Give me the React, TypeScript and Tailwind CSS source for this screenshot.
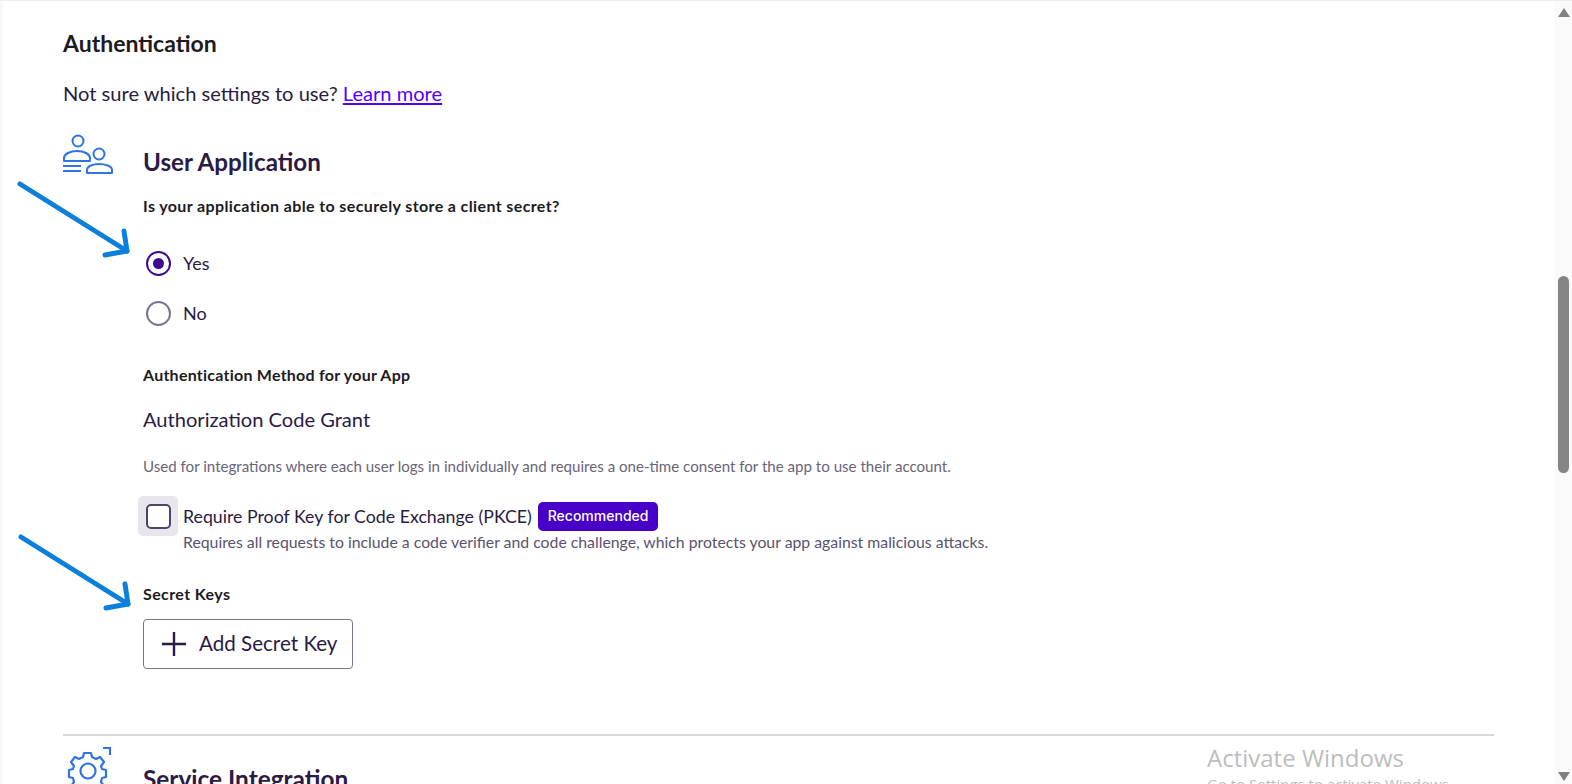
function UsersIcon() {
  return (
    <svg width="52" height="44" viewBox="0 0 52 44" fill="none" stroke="#2f74e0" strokeWidth="2">
      <circle cx="15" cy="7" r="5.5" />
      <path d="M1 27v-3c0-4 6-7 13-7s13 3 13 7v3z" strokeLinejoin="round" />
      <circle cx="36" cy="20" r="5.5" />
      <path d="M24 39v-3c0-4 6-6 12-6s13 2 13 6v3z" strokeLinejoin="round" />
      <path d="M0 32h18M0 37h18" />
    </svg>
  );
}

function GearIcon() {
  return (
    <svg width="46" height="46" viewBox="0 0 46 46" fill="none" stroke="#2f74e0" strokeWidth="2.2">
      <path d="M36 1h7v7" />
      <circle cx="21" cy="24" r="7.5" />
      <path
        d="M17 6h7l1 4 4 2 4-2 4 5-3 4 1 3 4 1v7l-4 1-1 4 3 4-4 5-4-2-4 2-1 4h-7l-1-4-4-2-4 2-4-5 3-4-1-4-4-1v-7l4-1 1-3-3-4 4-5 4 2 4-2z"
        strokeLinejoin="round"
      />
    </svg>
  );
}

function PlusIcon() {
  return (
    <svg width="24" height="24" viewBox="0 0 24 24" fill="none" stroke="#2a1a45" strokeWidth="2.4">
      <path d="M12 0v24M0 12h24" />
    </svg>
  );
}

function Arrow({ className }: { className: string }) {
  return (
    <svg className={className} width="120" height="84" viewBox="0 0 120 84" fill="none" stroke="#0a7fdc" strokeWidth="5" strokeLinecap="round" strokeLinejoin="round">
      <path d="M3 3 L110 70" />
      <path d="M107 50 L110 70 L88 74" />
    </svg>
  );
}

export default function App() {
  return (
    <div className="relative flex h-[784px] overflow-hidden border-t border-[#ececec] bg-white font-['Lato',sans-serif] text-[#2a1a45]">
      <div className="w-[3px] shrink-0 bg-[#f8f8f8]" />

      <main className="min-w-0 flex-1 pl-[60px] pr-[61px]">
        <h2 className="mt-[28px] text-[23px] leading-[28px] font-bold text-[#1d1a22]">Authentication</h2>
        <p className="mt-[22px] text-[20.1px] leading-[28px]">
          Not sure which settings to use?{" "}
          <a href="#" className="text-[#5500ff] underline">Learn more</a>
        </p>

        <section className="mt-[27px] flex">
          <div className="w-[80px] shrink-0">
            <UsersIcon />
          </div>
          <div className="flex-1">
            <h3 className="mt-[13px] text-[24.2px] leading-[30px] font-bold">User Application</h3>
            <p className="mt-[19px] text-[16px] leading-[20px] font-bold tracking-[0.38px] text-[#1d1a22]">
              Is your application able to securely store a client secret?
            </p>

            <div className="mt-[35px] flex flex-col gap-[25px] pl-[3px]">
              <label className="flex h-[25px] items-center gap-[12px] text-[18px]">
                <span className="flex h-[25px] w-[25px] items-center justify-center rounded-full border-2 border-[#3d0a91]">
                  <span className="h-[11px] w-[11px] rounded-full bg-[#3d0a91]" />
                </span>
                Yes
              </label>
              <label className="flex h-[25px] items-center gap-[12px] text-[18px]">
                <span className="h-[25px] w-[25px] rounded-full border-2 border-[#7b7290]" />
                No
              </label>
            </div>

            <p className="mt-[39px] text-[16px] leading-[20px] font-bold tracking-[0.24px] text-[#1d1a22]">
              Authentication Method for your App
            </p>
            <p className="mt-[20px] text-[20.1px] leading-[28px]">Authorization Code Grant</p>
            <p className="mt-[23px] text-[15.1px] leading-[20px] text-[#6a6478]">
              Used for integrations where each user logs in individually and requires a one-time consent for the app to use their account.
            </p>

            <div className="mt-[20px] -ml-[5px] flex">
              <div className="flex h-[40px] w-[40px] shrink-0 items-center justify-center rounded-[5px] bg-[#e8e6ec]">
                <span className="h-[25px] w-[25px] rounded-[5px] border-2 border-[#4f4468] bg-white" />
              </div>
              <div className="ml-[5px]">
                <div className="mt-[5px] flex items-center gap-[6px] text-[17.75px] leading-[30px]">
                  Require Proof Key for Code Exchange (PKCE)
                  <span className="flex h-[29px] items-center rounded-[5px] bg-[#4800c8] px-[10px] font-['Inter',sans-serif] text-[14px] font-medium text-white">
                    Recommended
                  </span>
                </div>
                <p className="mt-[1px] text-[15.8px] leading-[20px] text-[#5a5270]">
                  Requires all requests to include a code verifier and code challenge, which protects your app against malicious attacks.
                </p>
              </div>
            </div>

            <p className="mt-[32px] text-[16px] leading-[20px] font-bold tracking-[0.4px] text-[#1d1a22]">Secret Keys</p>
            <button className="mt-[15px] flex h-[50px] w-[210px] items-center gap-[13px] rounded-[4px] border border-[#7b7290] pl-[18px] text-[20.6px]">
              <PlusIcon />
              <span className="-mt-[2px]">Add Secret Key</span>
            </button>
          </div>
        </section>

        <hr className="mt-[65px] border-t-2 border-[#d9d9d9]" />

        <section className="mt-[11px] flex">
          <div className="w-[80px] shrink-0 pl-[4px]">
            <GearIcon />
          </div>
          <h3 className="mt-[17px] text-[24.4px] leading-[30px] font-bold">Service Integration</h3>
        </section>
      </main>

      <aside className="flex w-[17px] shrink-0 flex-col items-center bg-[#fafafa]">
        <span className="mt-[7px] h-0 w-0 border-x-[6px] border-b-[9px] border-x-transparent border-b-[#808080]" />
        <span className="mt-[259px] h-[197px] w-[11px] rounded-full bg-[#858585]" />
        <span className="mt-auto mb-[3px] h-0 w-0 border-x-[6px] border-t-[9px] border-x-transparent border-t-[#808080]" />
      </aside>

      <Arrow className="absolute left-[17px] top-[180px]" />
      <Arrow className="absolute left-[18px] top-[533px]" />

      <div className="pointer-events-none absolute left-[1207px] top-[741px] font-['Open_Sans',sans-serif] text-[#bdbdbd]">
        <p className="text-[24px] leading-[32px]">Activate Windows</p>
        <p className="text-[15px] leading-[20px]">Go to Settings to activate Windows.</p>
      </div>
    </div>
  );
}
